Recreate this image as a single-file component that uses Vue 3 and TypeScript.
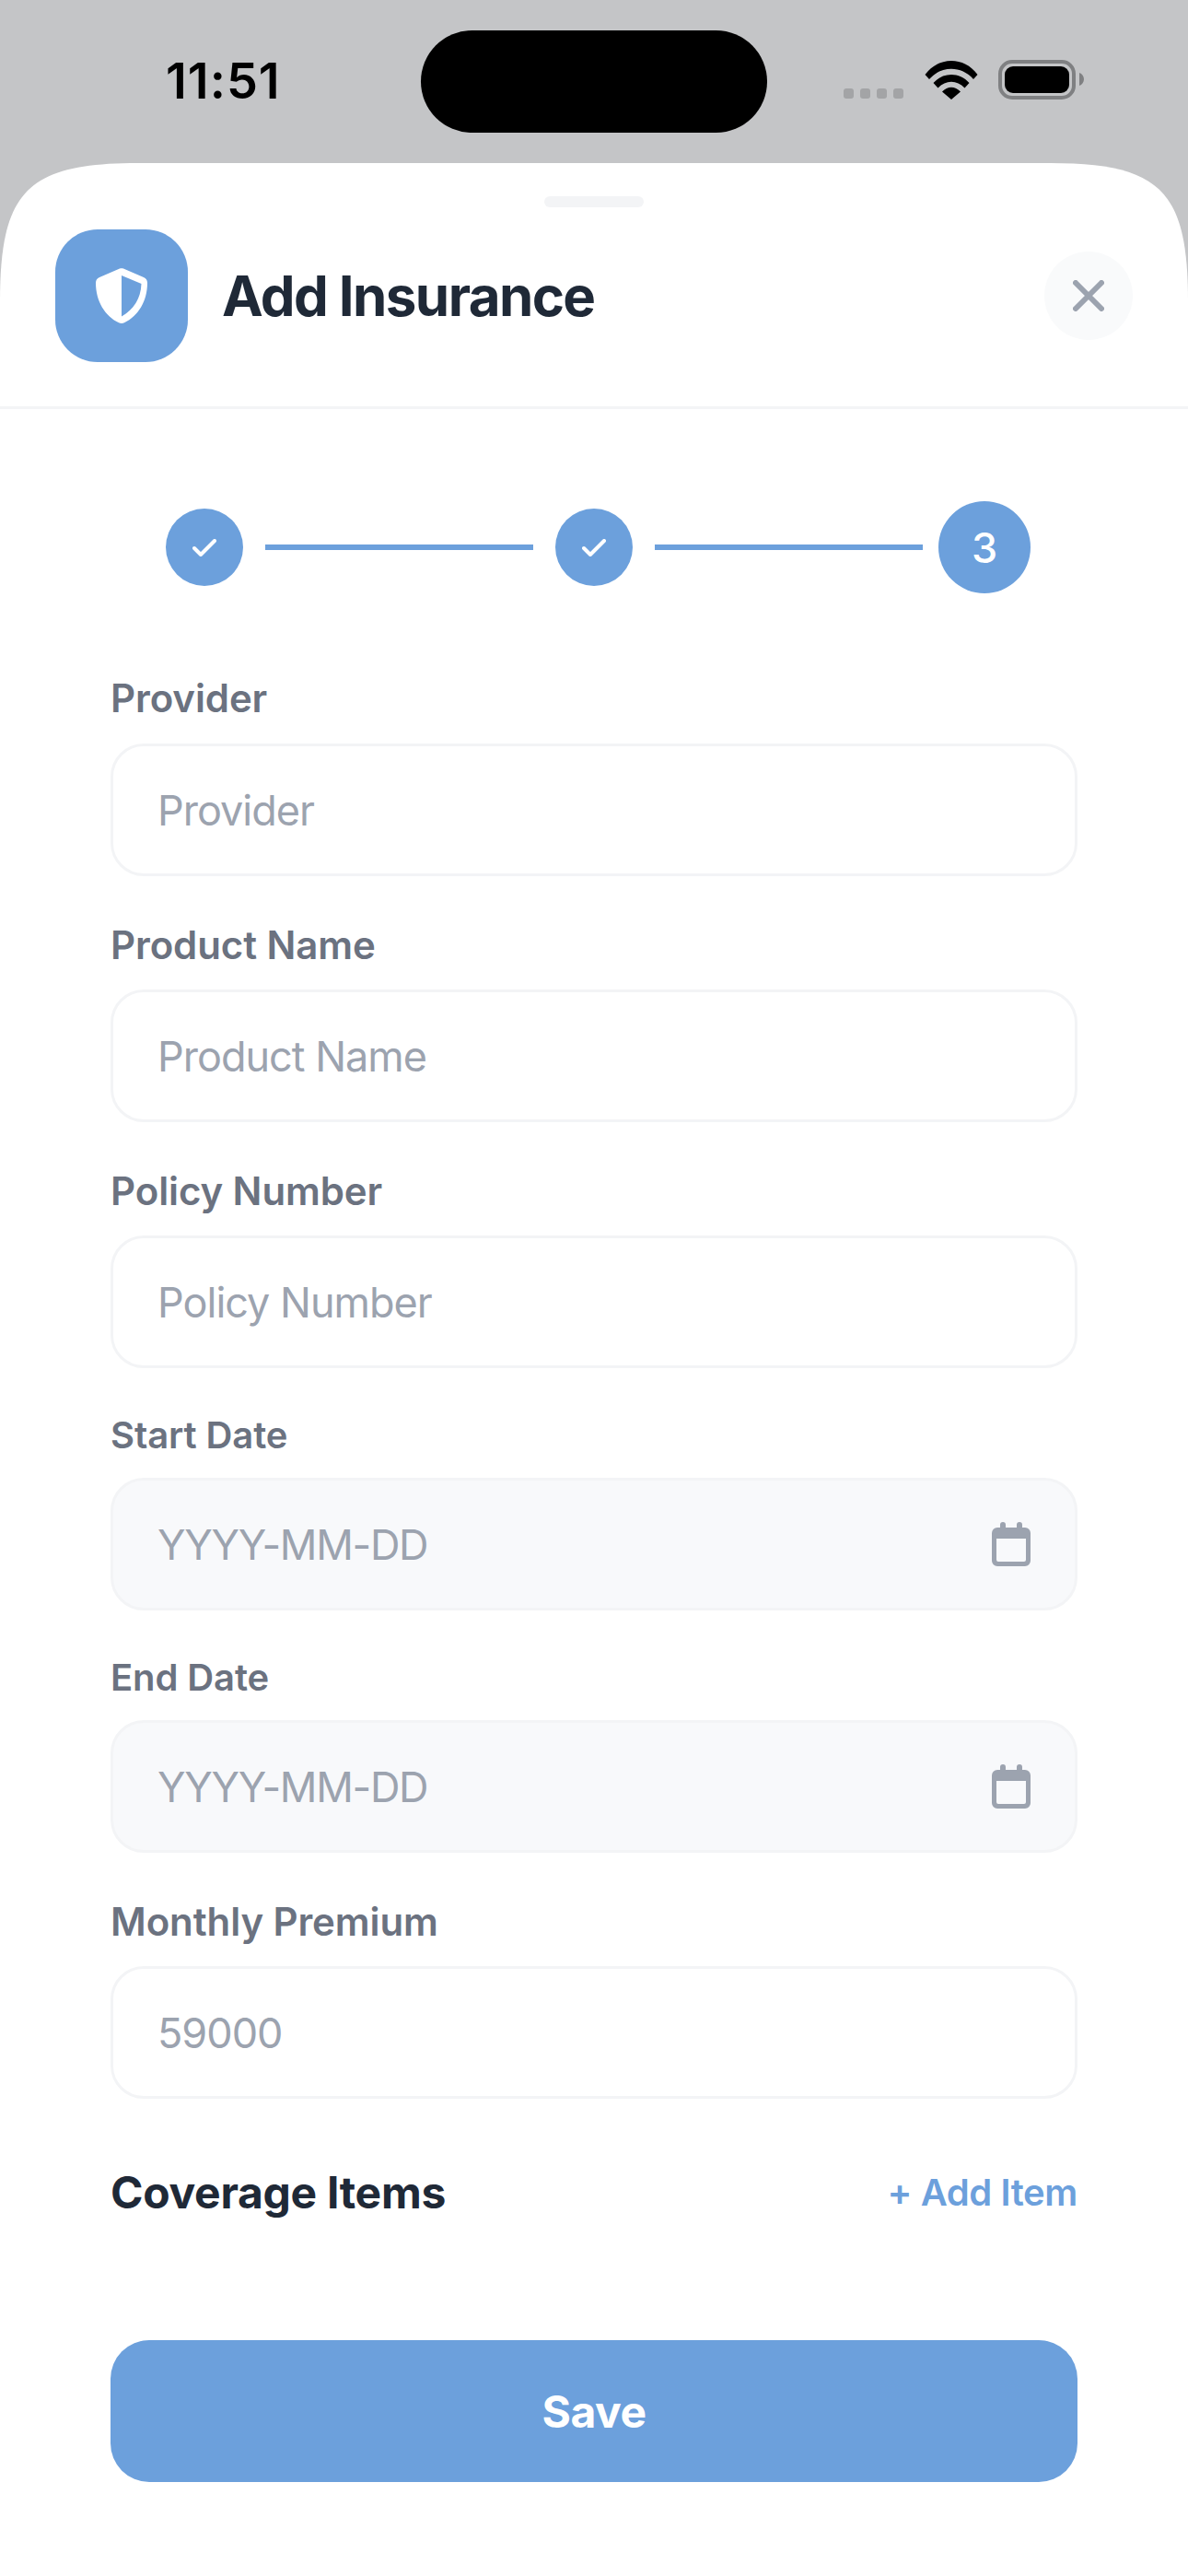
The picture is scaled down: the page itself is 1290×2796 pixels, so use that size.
<script setup lang="ts">
interface Field { label: string; value: string; date?: boolean }
const fields: Field[] = [
  { label: 'Provider', value: 'Provider' },
  { label: 'Product Name', value: 'Product Name' },
  { label: 'Policy Number', value: 'Policy Number' },
  { label: 'Start Date', value: 'YYYY-MM-DD', date: true },
  { label: 'End Date', value: 'YYYY-MM-DD', date: true },
  { label: 'Monthly Premium', value: '59000' },
]
</script>

<template>
  <div class="screen">
    <div class="status">
      <span class="time">11:51</span>
      <div class="island"></div>
      <div class="status-right">
        <div class="dots"><i></i><i></i><i></i><i></i></div>
        <svg class="wifi" width="58" height="43" viewBox="0 0 58 43">
          <path d="M0.5 16 C15 -4 43 -4 57.500 16 L53 21 C40 6 18 6 5 21Z M9.500 25 C20 13 38 13 48.500 25 L43.500 30.500 C35 21.500 23 21.500 14.500 30.500Z M19 34.500 C25 28 33 28 39 34.500 L29 43Z" fill="#000"/>
        </svg>
        <svg class="battery" width="94" height="43" viewBox="0 0 94 43">
          <rect x="2" y="2" width="80" height="39" rx="13" fill="none" stroke="#7f8082" stroke-width="4"/>
          <rect x="7" y="7" width="70" height="29" rx="9" fill="#000"/>
          <path d="M88 14 C91 15 93 18 93 21 C93 24 91 27 88 28Z" fill="#7f8082"/>
        </svg>
      </div>
    </div>

    <div class="sheet">
      <div class="handle"></div>
      <header class="head">
        <div class="logo">
          <svg width="56" height="60" viewBox="0 0 56 60">
            <path d="M26 0.500 C27.300 0 28.700 0 30 0.500 L52 10 C54.500 11 56 13 56 16 C56 36 46 52 31 59.300 C29 60.200 27 60.200 25 59.300 C10 52 0 36 0 16 C0 13 1.500 11 4 10Z" fill="#fff"/>
            <path d="M28 8 L49.500 17 C49 33 41 45 28 52.500Z" fill="#6ca0dc"/>
          </svg>
        </div>
        <h1 class="title">Add Insurance</h1>
        <button class="close">
          <svg width="34" height="34" viewBox="0 0 34 34">
            <path d="M3 3 L31 31 M31 3 L3 31" stroke="#9ca3af" stroke-width="6" stroke-linecap="round"/>
          </svg>
        </button>
      </header>

      <div class="body">
        <div class="steps">
          <div class="step">
            <svg width="26" height="19" viewBox="0 0 26 19"><path d="M2 10 L9 17 L24 2" fill="none" stroke="#fff" stroke-width="4" stroke-linecap="round" stroke-linejoin="round"/></svg>
          </div>
          <div class="line"></div>
          <div class="step">
            <svg width="26" height="19" viewBox="0 0 26 19"><path d="M2 10 L9 17 L24 2" fill="none" stroke="#fff" stroke-width="4" stroke-linecap="round" stroke-linejoin="round"/></svg>
          </div>
          <div class="line"></div>
          <div class="step current">3</div>
        </div>

        <div class="form">
          <div v-for="f in fields" :key="f.label" class="field" :class="{ dated: f.date }">
            <label class="label">{{ f.label }}</label>
            <div class="input">
              <span class="ph">{{ f.value }}</span>
              <svg v-if="f.date" class="cal" width="42" height="48" viewBox="0 0 42 48">
                <path d="M12 0 a3 3 0 0 1 3 3 V6 H27 V3 a3 3 0 0 1 6 0 V6 H36 a6 6 0 0 1 6 6 V42 a6 6 0 0 1 -6 6 H6 a6 6 0 0 1 -6 -6 V12 a6 6 0 0 1 6 -6 H9 V3 a3 3 0 0 1 3 -3Z M5 18 V41 a2 2 0 0 0 2 2 H35 a2 2 0 0 0 2 -2 V18Z" fill="#9ca3af" fill-rule="evenodd"/>
              </svg>
            </div>
          </div>
        </div>

        <div class="coverage">
          <span class="cov-title">Coverage Items</span>
          <span class="add">+ Add Item</span>
        </div>

        <button class="save">Save</button>
      </div>
    </div>
  </div>
</template>

<style>
html, body { margin: 0; background: #fff; }
</style>

<style scoped>
.screen {
  width: 1290px;
  height: 2796px;
  background: #c4c5c7;
  font-family: Inter, "Noto Sans", sans-serif;
  overflow: hidden;
  display: flex;
  flex-direction: column;
}
.status {
  height: 177px;
  flex: none;
  display: flex;
  align-items: flex-start;
  position: relative;
}
.time {
  margin: 56px 0 0 180px;
  font-size: 54px;
  line-height: 64px;
  font-weight: 600;
  color: #000;
  letter-spacing: 1px;
}
.island {
  position: absolute;
  left: 457px;
  top: 33px;
  width: 376px;
  height: 111px;
  border-radius: 56px;
  background: #000;
}
.status-right {
  margin-left: auto;
  margin-right: 112px;
  margin-top: 65px;
  display: flex;
  align-items: flex-start;
}
.dots { display: flex; gap: 7px; margin-top: 31px; margin-right: 23px; }
.dots i { width: 11px; height: 11px; border-radius: 3px; background: #a3a4a6; display: block; }
.wifi { margin-right: 22px; }
.sheet {
  flex: 1;
  background: #fff;
  position: relative;
  clip-path: path("M0 150 C0 30 30 0 150 0 L1140 0 C1260 0 1290 30 1290 150 L1290 2700 L0 2700 Z");
}
.handle {
  position: absolute;
  left: 591px;
  top: 36px;
  width: 108px;
  height: 12px;
  border-radius: 6px;
  background: #f3f4f6;
}
.head {
  height: 267px;
  padding: 72px 60px 0 60px;
  box-sizing: border-box;
  border-bottom: 3px solid #f3f4f6;
  display: flex;
  align-items: flex-start;
}
.logo {
  width: 144px;
  height: 144px;
  border-radius: 46px;
  background: #6ca0dc;
  display: flex;
  align-items: center;
  justify-content: center;
  flex: none;
}
.title {
  margin: 0 0 0 37px;
  font-size: 60px;
  line-height: 144px;
  font-weight: 700;
  color: #1f2937;
  letter-spacing: -1.6px;
}
.close {
  margin: 24px 0 0 auto;
  width: 96px;
  height: 96px;
  border: 0;
  padding: 0;
  border-radius: 50%;
  background: #f9fafb;
  display: flex;
  align-items: center;
  justify-content: center;
}
.body { padding: 0 120px; }
.steps {
  height: 100px;
  margin: 100px 51px 0 60px;
  display: flex;
  align-items: center;
}
.step {
  width: 84px;
  height: 84px;
  border-radius: 50%;
  background: #6ca0dc;
  display: flex;
  align-items: center;
  justify-content: center;
  flex: none;
}
.step.current {
  width: 100px;
  height: 100px;
  margin-left: -7px;
  color: #fff;
  font-size: 45px;
  font-weight: 500;
}
.line { flex: 1; height: 6px; margin: 0 24px; background: #6ca0dc; }
.form { margin-top: 84px; display: flex; flex-direction: column; }
.field { display: flex; flex-direction: column; margin-bottom: 45px; }
.label {
  font-size: 42px;
  line-height: 59px;
  font-weight: 600;
  color: #6b7280;
  margin-bottom: 19px;
  letter-spacing: -0.1px;
}
.dated .label { font-size: 40px; line-height: 55px; margin-bottom: 19px; }
.form .field:first-child .label { line-height: 60px; }
.input {
  height: 144px;
  box-sizing: border-box;
  border: 3px solid #f3f4f6;
  border-radius: 36px;
  padding: 0 48px;
  display: flex;
  align-items: center;
  justify-content: space-between;
  background: #fff;
}
.dated .input { background: #f8f9fb; }
.ph { font-size: 45px; color: #9ca3af; font-weight: 400; letter-spacing: -1px; }
.dated .ph { letter-spacing: -1.3px; }
.cal { display: block; }
.coverage {
  display: flex;
  align-items: center;
  justify-content: space-between;
  height: 60px;
  margin-top: 26px;
}
.cov-title { font-size: 48px; font-weight: 700; color: #1f2937; letter-spacing: -0.3px; }
.add { font-size: 40px; font-weight: 600; color: #6ca0dc; letter-spacing: -0.4px; }
.save {
  display: block;
  width: 100%;
  height: 154px;
  margin-top: 131px;
  border: 0;
  border-radius: 42px;
  background: #6ca0dc;
  color: #fff;
  font-family: inherit;
  font-size: 48px;
  font-weight: 700;
  letter-spacing: -0.5px;
}
</style>
